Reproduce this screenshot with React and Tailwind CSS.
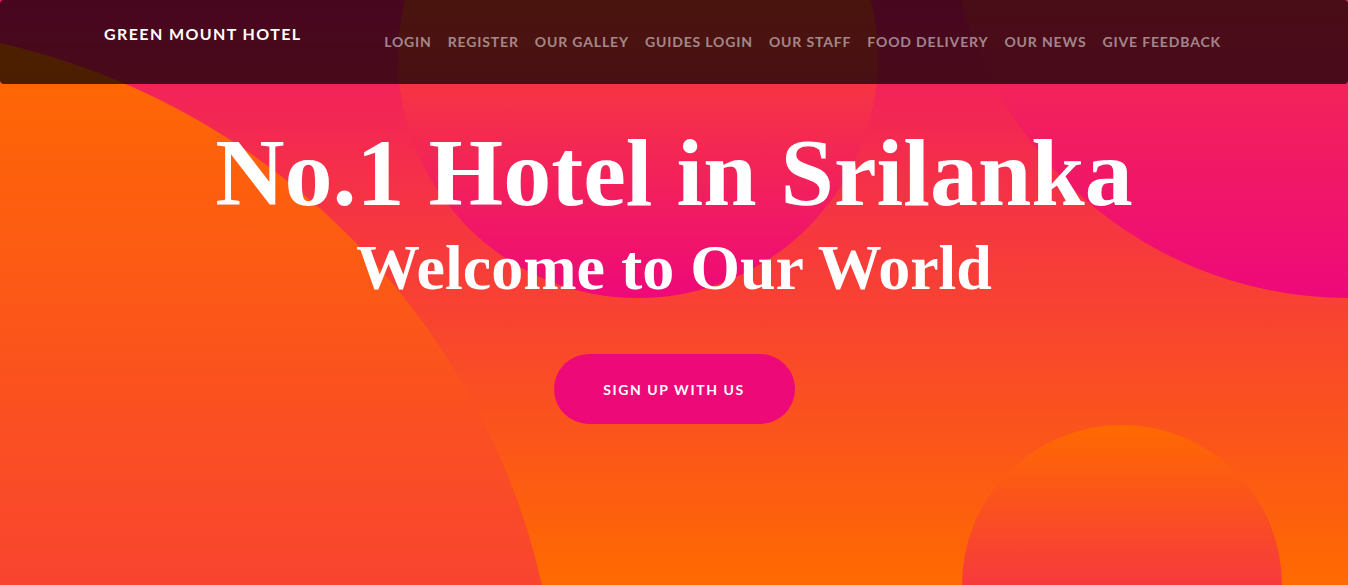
import React from 'react';

const LINKS = ['Login', 'Register', 'Our Galley', 'Guides Login', 'Our Staff', 'Food Delivery', 'Our News', 'Give Feedback'];

export default function App() {
  return (
    <div className="relative h-[585px] overflow-hidden bg-[linear-gradient(0deg,#ff6a00_0%,#ee0979_116%)] font-['Lato','Noto_Sans',sans-serif]">
      {/* Background circles */}
      <div className="absolute left-[-880px] bottom-[-880px] h-[1440px] w-[1440px] rounded-full bg-[linear-gradient(0deg,#ee0979_0%,#ff6a00_100%)]"></div>
      <div className="absolute right-[-400px] top-[-502px] h-[800px] w-[800px] rounded-full bg-[linear-gradient(0deg,#ee0979_0%,#ff6a00_100%)]"></div>
      <div className="absolute right-[66px] bottom-[-160px] h-[320px] w-[320px] rounded-full bg-[linear-gradient(0deg,#ee0979_0%,#ff6a00_100%)]"></div>
      <div className="absolute right-[470px] top-[-182px] h-[480px] w-[480px] rounded-full bg-[linear-gradient(0deg,#ee0979_0%,#ff6a00_100%)]"></div>

      {/* Navbar */}
      <nav className="relative z-10 h-[84px] w-full rounded bg-black/70">
        <div className="mx-auto flex w-[1140px] items-start">
          <a className="pt-[22px] text-[16px] leading-6 font-bold uppercase tracking-[1.4px] text-white">
            Green Mount Hotel
          </a>
          <ul className="ml-auto mr-[15px] flex pt-[30px]">
            {LINKS.map(link => (
              <li key={link}>
                <a className="block px-2 text-[14px] leading-6 font-bold uppercase tracking-[0.85px] text-white/50">
                  {link}
                </a>
              </li>
            ))}
          </ul>
        </div>
      </nav>

      {/* Masthead content */}
      <div className="relative z-[1] pt-[31px] text-center text-white">
        <h1 className="font-['Liberation_Serif','Times_New_Roman',serif] text-[96px] leading-[1.2] font-bold">
          No.1 Hotel in Srilanka
        </h1>
        <h2 className="font-['Liberation_Serif','Times_New_Roman',serif] text-[64px] leading-[1.2] font-bold">
          Welcome to Our World
        </h2>
        <button className="mt-[47px] h-[70px] w-[241px] rounded-full bg-[#ee0979] pt-[2px] text-[14px] font-bold uppercase tracking-[1.6px] text-white">
          Sign Up With Us
        </button>
      </div>
    </div>
  );
}
